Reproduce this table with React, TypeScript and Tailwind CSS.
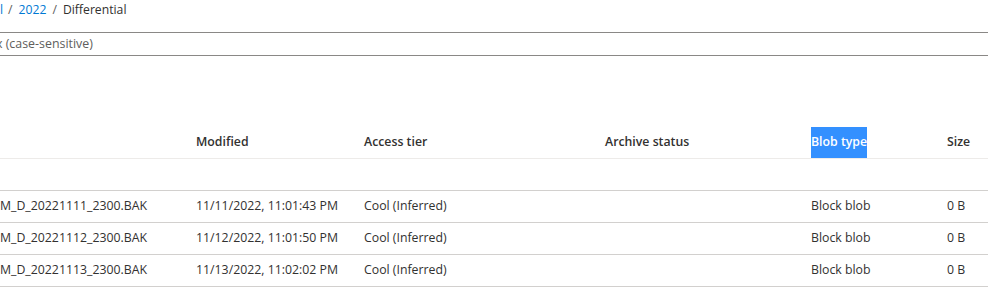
import React from 'react';

const rows = [
  { name: 'M_D_20221111_2300.BAK', modified: '11/11/2022, 11:01:43 PM' },
  { name: 'M_D_20221112_2300.BAK', modified: '11/12/2022, 11:01:50 PM' },
  { name: 'M_D_20221113_2300.BAK', modified: '11/13/2022, 11:02:02 PM' },
];

const cols = 'grid grid-cols-[196px_168px_241px_206px_136px_1fr]';

export default function App() {
  return (
    <div
      className="w-[988px] h-[295px] overflow-hidden bg-white text-[#323130]"
      style={{ fontFamily: '"Open Sans", "Noto Sans", sans-serif' }}
    >
      {/* breadcrumb */}
      <div className="h-[21px] flex items-center text-[12.2px] leading-none">
        <span className="text-[#0078d4]">l</span>
        <span className="ml-[5px] text-[#605e5c]">/</span>
        <span className="ml-[6px] text-[#0078d4]">2022</span>
        <span className="ml-[6px] text-[#605e5c]">/</span>
        <span className="ml-[6px]">Differential</span>
      </div>

      {/* search box */}
      <div className="mt-[11px] -ml-[6px] w-[1000px] h-[24px] border border-[#8a8886] flex items-center text-[12.4px] text-[#605e5c]">
        <span className="ml-[1px]">x (case-sensitive)</span>
      </div>

      {/* table */}
      <div className="mt-[70px] text-[12.3px]">
        <div className={`${cols} h-[33px] items-center border-b border-[#edebe9] font-semibold`}>
          <div></div>
          <div>Modified</div>
          <div>Access tier</div>
          <div>Archive status</div>
          <div>
            <span className="inline-flex items-center h-[31px] bg-[#3390ff] text-white">Blob type</span>
          </div>
          <div>Size</div>
        </div>
        <div className="h-[32px] border-b border-[#d2d0ce]"></div>
        {rows.map((r) => (
          <div key={r.name} className={`${cols} h-[32px] items-center border-b border-[#d2d0ce]`}>
            <div>{r.name}</div>
            <div>{r.modified}</div>
            <div>Cool (Inferred)</div>
            <div></div>
            <div>Block blob</div>
            <div>0 B</div>
          </div>
        ))}
      </div>
    </div>
  );
}
